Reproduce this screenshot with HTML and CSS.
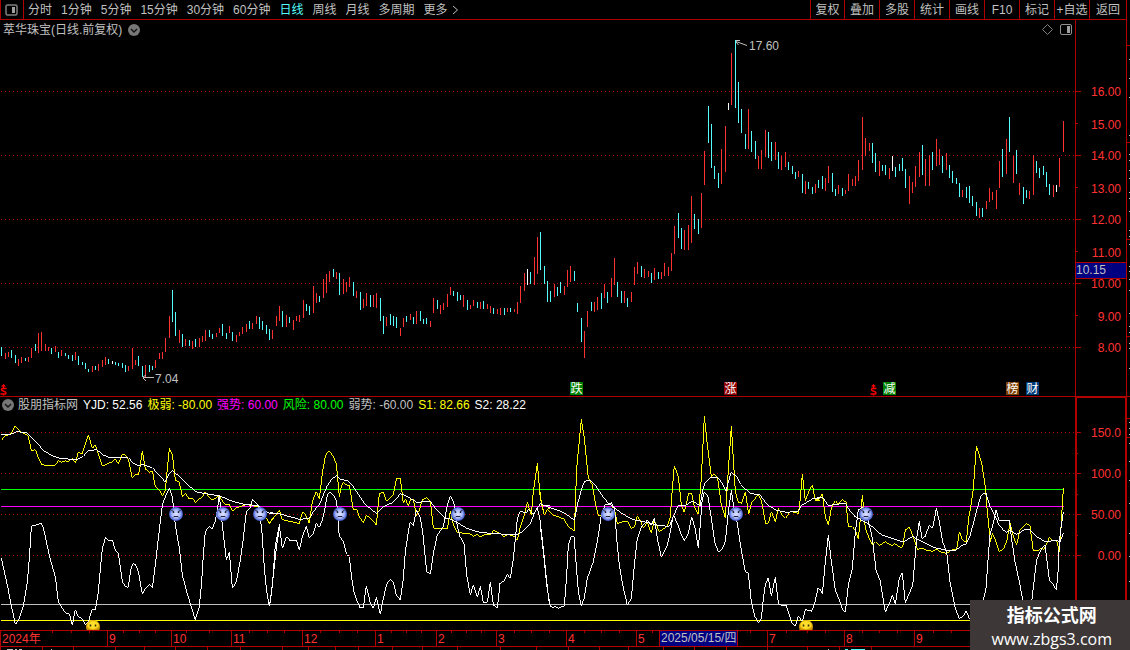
FILE: index.html
```html
<!DOCTYPE html>
<html lang="zh-CN">
<head>
<meta charset="utf-8">
<title>萃华珠宝 日线</title>
<link rel="stylesheet" href="styles.css">
</head>
<body>
<header class="toolbar">
  <button class="layout-btn" aria-label="布局"><svg width="13" height="12" viewBox="0 0 13 12"><rect x="1" y="1" width="11" height="10" rx="1.5" fill="none" stroke="#808080" stroke-width="1.5"/><rect x="7" y="3" width="3" height="6" fill="#a0a0a0"/></svg></button>
  <nav class="periods">
    <button>分时</button><button>1分钟</button><button>5分钟</button><button>15分钟</button><button>30分钟</button><button>60分钟</button><button class="active">日线</button><button>周线</button><button>月线</button><button>多周期</button><button class="more">更多<svg width="7" height="10" viewBox="0 0 7 10"><path d="M1 1L5.5 5L1 9" fill="none" stroke="#c0c0c0"/></svg></button>
  </nav>
  <div class="tools">
    <button>复权</button><button>叠加</button><button>多股</button><button>统计</button><button>画线</button><button>F10</button><button>标记</button><button>+自选</button><button>返回</button>
  </div>
</header>
<main>
<section class="panel">
  <div class="title-row">
    <h1>萃华珠宝(日线.前复权)</h1>
    <button class="round" aria-label="展开"><svg width="12" height="12" viewBox="0 0 12 12"><circle cx="6" cy="6" r="6" fill="#777"/><path d="M3 5L6 8L9 5" fill="none" stroke="#111" stroke-width="1.4"/></svg></button>
    <div class="corner">
      <svg width="11" height="11" viewBox="0 0 11 11"><path d="M5.500.5L10.500 5.500L5.500 10.500L.5 5.500Z" fill="none" stroke="#808080"/></svg>
      <svg width="12" height="11" viewBox="0 0 12 11"><rect x=".5" y=".5" width="11" height="10" rx="1.500" fill="none" stroke="#909090"/><rect x="7" y="2" width="3" height="7" fill="#a0a0a0"/></svg>
    </div>
    <div class="axis-gap"></div>
  </div>
  <svg class="chart" viewBox="0 39 1130 357" role="img" aria-label="日K线">
    <g class="grid">
      <path d="M1 91.500H1075M1 155.500H1075M1 219.500H1075M1 283.500H1075M1 347.500H1075"/>
    </g>
    <g class="bars" transform="translate(0 270) scale(.333333)">
      <path class="down" d="M4 231V258M34 240V264M46 255V279M76 264V273M106 222V243M154 234V252M175 246V264M196 249V258M205 255V267M217 255V273M235 258V285M247 276V285M256 279V297M265 297V306M286 288V300M325 267V282M346 276V285M355 279V288M367 279V294M376 285V306M415 258V288M427 288V321M448 285V306M457 288V300M517 60V156M526 126V198M547 192V231M568 210V228M586 207V231M628 180V201M637 192V207M667 162V198M679 189V207M697 186V213M748 153V177M778 141V177M787 153V180M799 165V192M808 177V210M847 123V171M868 141V159M919 102V123M928 108V135M958 78V96M1000 -3V21M1018 9V75M1060 36V78M1081 66V120M1111 75V111"/>
      <path class="up" d="M16 249V267M25 246V261M55 267V288M64 261V279M85 261V276M94 234V264M115 189V249M124 186V243M136 222V243M145 231V243M166 228V246M184 240V258M226 246V270M277 288V306M295 282V303M307 270V291M316 261V285M385 288V303M397 234V297M406 270V285M436 285V321M466 270V294M478 249V267M487 246V267M496 204V246M508 138V204M538 180V219M556 207V228M577 213V237M598 204V231M607 198V216M616 180V213M649 189V201M658 174V189M688 168V189M709 195V216M718 186V198M727 171V192M739 162V186M757 159V177M769 138V162M817 180V207M829 138V168M838 108V153M859 135V171M880 150V180M889 138V153M898 135V156M910 90V144M940 48V129M949 69V99M970 27V84M979 12V69M988 3V36M1009 6V27M1030 27V72M1039 36V66M1048 21V51M1069 63V84M1090 87V114M1099 69V108M1120 75V111M1129 69V114"/>
      <path class="flat" d="M337 273V282"/>
    </g>
    <g class="bars" transform="translate(370 220) scale(.333333)">
      <path class="down" d="M31 234V303M40 288V342M61 282V315M70 288V318M79 291V324M109 288V306M130 291V312M151 273V303M160 297V312M169 294V312M202 240V267M250 213V228M262 216V243M271 225V240M292 240V270M322 246V264M340 243V267M370 264V282M403 264V285M421 264V276M481 156V192M511 36V150M523 138V192M532 183V246M541 213V246M562 201V228M571 186V219M613 153V183M622 249V276M634 294V366M664 246V273M694 219V267M712 216V249M742 186V231M754 213V249M772 234V261M814 138V171M844 159V189M865 156V177"/>
      <path class="up" d="M49 291V318M91 324V348M100 294V321M121 282V300M139 273V312M181 303V321M190 234V279M211 255V282M220 249V270M232 222V261M241 201V225M280 225V261M301 255V267M310 240V258M331 246V267M352 252V267M361 258V279M382 267V282M391 264V285M412 264V276M433 267V276M442 246V282M451 198V249M463 159V213M493 111V195M502 51V162M553 192V231M583 198V225M592 150V201M601 138V186M643 333V414M652 273V321M673 246V276M682 231V270M703 192V234M724 174V231M733 114V195M763 213V249M784 216V246M793 141V195M802 126V162M823 147V174M835 153V171M853 144V180M874 156V177M883 129V168M895 141V168M904 99V153"/>
      <path class="flat" d="M472 147V195"/>
    </g>
    <g class="bars" transform="translate(660 30) scale(.333333)">
      <path class="up" d="M43 588V672M73 600V660M85 585V660M94 498V639M124 489V594M133 363V465M184 357V462M196 288V426M214 69V225M265 237V357M295 378V417M304 360V417M316 300V381M346 336V390M364 378V420M376 366V411M415 423V441M436 453V492M466 462V489M496 444V483M505 408V459M535 465V492M556 480V492M565 432V483M577 447V468M586 438V468M595 390V453M607 261V420"/>
      <path class="down" d="M55 549V624M64 594V657M103 552V597M115 567V612M145 228V339M154 282V414M163 408V447M175 429V474M226 30V234M235 156V279M244 237V309M256 312V357M274 303V366M286 333V387M325 306V384M334 336V393M355 366V417M385 396V420M397 408V432M406 426V447M427 432V489M445 456V477M457 471V492M475 450V474M487 438V477M517 429V486M526 477V498M547 474V498"/>
      <path class="flat" d="M205 219V240"/>
    </g>
    <g class="bars" transform="translate(850 90) scale(.333333)">
      <path class="up" d="M46 144V198M58 159V183M88 213V258M118 234V267M178 258V342M187 276V309M196 228V291M208 186V261M226 207V288M238 195V288M259 147V228M268 177V225M289 189V240M337 300V321M388 354V384M409 333V357M418 294V336M427 306V330M439 300V357M448 213V294M469 147V252M490 198V279M508 279V315M538 303V327M550 195V315M610 285V321M628 204V291M640 93V186"/>
      <path class="down" d="M67 159V219M76 189V246M97 225V243M106 225V255M136 231V261M148 222V243M157 204V243M166 237V294M217 165V255M247 186V240M277 198V249M298 225V264M307 243V279M319 264V282M328 279V321M349 291V324M358 288V339M367 318V348M379 336V378M397 354V381M457 177V261M478 81V186M499 180V252M520 291V342M529 300V324M559 213V249M568 234V264M580 228V255M589 246V291M598 282V315"/>
      <path class="flat" d="M127 198V243M619 285V306"/>
    </g>
    <g class="note">
      <path d="M736 40.500H740M736 41.500L747 45.500M736 42L738.500 45"/><text x="749" y="50">17.60</text>
      <path d="M143 377.500H154M143 377L146 375M143 378L146 381"/><text x="155" y="383">7.04</text>
    </g>
    <g class="tags">
      <rect x="570" y="382" width="13" height="13" fill="#008000"/><text x="570.500" y="393">跌</text>
      <rect x="724" y="382" width="13" height="13" fill="#900000"/><text x="724.500" y="393">涨</text>
      <rect x="883" y="382" width="13" height="13" fill="#008000"/><text x="883.500" y="393">减</text>
      <rect x="1006" y="382" width="13" height="13" fill="#804000"/><text x="1006.500" y="393">榜</text>
      <rect x="1026" y="382" width="13" height="13" fill="#003c78"/><text x="1026.500" y="393">财</text>
    </g>
    <defs><g id="bonus"><path d="M1 2.500L3.500 0L6 2.500Z" fill="#f00"/><path d="M6.500 4.500H2L1.500 5.500L2 6.500L5.500 8L6 9L5.500 10H.5M3.500 2V4M3.500 10V11.500" fill="none" stroke="#f00" stroke-width="1.400"/></g></defs>
    <use href="#bonus" x="0" y="384"/><use href="#bonus" x="870" y="384"/>
    <path class="frame" d="M1075.500 39V396M1126.500 39V396M1076 91.500H1081M1076 123.500H1078M1076 155.500H1081M1076 187.500H1078M1076 219.500H1081M1076 251.500H1078M1076 283.500H1081M1076 315.500H1078M1076 347.500H1081M1127 45.500H1130M1127 142.500H1130M1127 239.500H1130M1127 336.500H1130"/>
    <path class="edge" d="M1129.500 59v1m0 18v1m0 18v1m0 37v1m0 18v1m0 5v1m0 9v1m0 7v1m0 13v1m0 5v1m0 12v1m0 18v1m0 5v1m0 7v1m0 21v1m0 4v1m0 7v1m0 10v1m0 22v1m0 12v1m0 5v1m0 10v1m0 4v1m0 19v1"/>
    <g class="scale">
      <text x="1121" y="96">16.00</text><text x="1121" y="129">15.00</text><text x="1121" y="160">14.00</text><text x="1121" y="193">13.00</text><text x="1121" y="224">12.00</text><text x="1121" y="257">11.00</text><text x="1121" y="288">10.00</text><text x="1121" y="321">9.00</text><text x="1121" y="352">8.00</text>
    </g>
    <rect x="1076" y="262" width="50" height="16" fill="#000080"/>
    <path class="frame" d="M1075 262.500H1127M1075 278.500H1127"/>
    <text class="cursor" x="1076" y="274">10.15</text>
  </svg>
</section>
<section class="panel indicator">
  <div class="legend">
    <button class="round" aria-label="展开"><svg width="12" height="12" viewBox="0 0 12 12"><circle cx="6" cy="6" r="6" fill="#777"/><path d="M3 5L6 8L9 5" fill="none" stroke="#111" stroke-width="1.4"/></svg></button>
    <span>股朋指标网</span><span class="white">YJD: 52.56</span><span class="yellow">极弱: -80.00</span><span class="magenta">强势: 60.00</span><span class="green">风险: 80.00</span><span>弱势: -60.00</span><span class="yellow">S1: 82.66</span><span class="white">S2: 28.22</span>
    <i class="axis-top"></i>
  </div>
  <svg class="chart" viewBox="0 413 1130 237" role="img" aria-label="YJD指标">
    <defs>
      <radialGradient id="ballBlue"><stop offset="0" stop-color="#e0e4ff"/><stop offset=".6" stop-color="#a8b8ff"/><stop offset="1" stop-color="#3850c0"/></radialGradient>
      <g id="sad"><circle r="7" fill="url(#ballBlue)"/><path d="M-4.500 -3.500L-2 -2.500M4.500 -3.500L2 -2.500M-3 3.500L-2 2.500H2L3 3.500" fill="none" stroke="#202030"/><path d="M-2.500 -2.500V-1M2.500 -2.500V-1" stroke="#202030" stroke-width="1.500"/></g>
      <radialGradient id="ballGold"><stop offset="0" stop-color="#ffe838"/><stop offset=".7" stop-color="#ffd820"/><stop offset="1" stop-color="#c89000"/></radialGradient>
      <g id="calm"><path d="M-6.300 3A7 7 0 1 1 6.300 3Z" fill="url(#ballGold)"/><path d="M-2.500 -2.500V-.5M2.500 -2.500V-.5" stroke="#403000" stroke-width="1.600"/></g>
    </defs>
    <g class="grid"><path d="M1 432.500H1075M1 473.500H1075M1 514.500H1075M1 555.500H1075"/></g>
    <g class="levels"><path stroke="#00ff00" d="M1 489.500H1064"/><path stroke="#ff00ff" d="M1 506.500H1064"/><path stroke="#c0c0c0" d="M1 604.500H1064"/><path stroke="#ffff00" d="M1 620.500H1064"/></g>
    <g class="lines" transform="translate(0 395) scale(.333333)">
      <polyline class="s1" points="4,136 16,122 25,120 34,114 46,92 55,104 64,112 76,117 85,124 94,168 106,164 115,188 124,207 136,211 166,210 175,197 184,202 196,197 205,200 217,190 226,204 235,172 247,176 256,146 265,119 277,160 286,150 295,178 307,213 325,205 337,200 346,193 355,207 367,178 376,180 385,192 397,250 406,238 415,240 421,210 427,168 436,222 448,232 457,228 466,275 478,285 487,302 496,288 502,220 508,160 517,178 526,256 538,262 547,305 556,295 568,312 577,308 586,322 598,312 607,306 616,290 625,303 637,315 646,310 658,302 667,318 679,330 688,328 697,348 709,338 727,333 739,328 757,332 778,337 790,360 799,368 808,386 817,370 829,358 840,346"/>
      <polyline class="s2" points="4,118 25,120 52,110 82,114 106,138 130,166 160,184 180,190 230,194 250,184 265,167 290,164 310,180 330,189 385,188 400,204 415,213 427,208 457,218 470,232 495,260 505,240 517,227 535,242 560,265 586,290 610,295 660,303 700,320 730,327 775,332 790,345 810,356 840,355"/>
      <polyline class="yjd" points="4,489 22,570 34,632 46,688 55,678 70,632 82,560 88,490 94,394 124,385 130,398 150,490 166,545 175,620 190,645 200,657 208,657 217,690 226,644 235,665 247,672 256,690 265,680 277,642 286,645 295,590 302,510 307,462 316,428 325,436 337,436 346,465 355,475 367,560 376,575 385,577 392,525 398,506 406,508 415,530 427,597 436,580 448,568 457,578 466,510 475,430 487,330 496,305 508,280 517,305 526,390 538,460 547,540 560,590 575,640 586,674 598,635 605,560 610,480 616,410 628,394 637,402 645,380 652,345 658,300 667,390 679,495 688,472 697,580 709,560 720,500 730,430 739,350 750,340 757,313 775,330 785,400 793,520 800,590 808,632 815,590 820,540 830,450 840,388"/>
    </g>
    <g class="lines" transform="translate(270 395) scale(.333333)">
      <polyline class="s1" points="0,383 10,370 28,346 37,374 55,378 88,386 97,352 103,353 118,385 127,320 139,290 148,312 157,235 166,183 172,172 178,168 187,180 199,205 208,305 214,275 220,262 232,272 238,270 250,345 260,343 268,365 280,383 289,361 301,370 310,378 319,390 328,295 340,292 349,318 358,313 370,298 379,252 391,250 400,325 406,312 415,332 421,315 430,312 439,362 448,345 457,315 469,308 481,317 490,398 500,402 532,402 541,348 550,390 562,413 600,416 610,424 622,418 631,425 645,418 660,420 672,406 690,415 702,425 715,418 732,424 742,435 750,400 760,370 772,322 784,360 790,290 802,205 811,310 823,360 832,343 840,340"/>
      <polyline class="s2" points="0,353 30,357 88,373 118,370 130,350 150,325 160,300 172,272 184,255 199,241 210,252 235,258 250,275 268,302 285,328 319,355 340,335 370,322 391,296 415,306 440,322 481,319 500,345 525,370 541,372 565,384 590,400 620,410 660,415 740,420 760,408 780,388 795,350 811,326 825,333 840,333"/>
      <polyline class="yjd" points="0,624 8,560 16,450 28,392 37,460 50,425 60,437 79,436 88,465 97,425 109,394 118,430 130,415 139,385 148,397 157,375 163,350 172,300 180,290 193,305 200,320 205,390 208,425 220,438 230,478 238,485 245,550 252,590 262,620 270,638 280,638 289,572 300,620 310,640 319,607 331,658 340,610 350,568 361,553 370,560 379,600 391,615 400,550 406,470 415,410 421,380 430,392 439,345 450,365 458,410 465,480 470,530 481,538 490,475 502,420 520,395 532,330 541,302 550,320 556,345 562,395 570,425 582,445 590,540 601,600 610,570 622,607 631,574 640,622 652,622 661,560 670,630 682,640 690,565 702,558 712,538 721,550 730,490 736,430 742,370 750,350 770,352 775,342 784,350 790,358 802,338 810,375 820,460 830,560 838,625"/>
    </g>
    <g class="lines" transform="translate(540 395) scale(.333333)">
      <polyline class="s1" points="0,290 5,330 13,360 22,342 40,360 72,372 85,395 103,408 110,220 124,73 133,130 145,250 157,270 166,325 175,360 186,363 222,335 232,385 250,380 262,378 274,400 284,395 292,362 301,378 310,398 322,383 334,415 343,375 358,410 370,402 382,393 391,365 397,280 403,212 415,245 424,330 433,352 446,295 455,296 463,335 475,358 484,250 493,64 502,150 514,245 522,236 533,250 544,330 556,368 564,240 574,94 586,290 595,322 605,325 616,290 626,358 634,325 655,298 665,320 677,387 685,385 694,350 706,380 715,340 725,358 737,370 750,350 765,352 775,356 780,320 787,237 796,318 808,285 817,270 826,316 840,316"/>
      <polyline class="s2" points="0,326 30,338 70,352 103,375 112,330 124,285 133,260 148,255 163,266 185,300 205,325 225,340 250,358 280,374 320,382 360,392 388,394 400,365 415,330 435,332 457,318 480,332 488,285 496,262 510,248 535,248 548,268 558,288 568,250 574,232 590,245 602,268 630,295 660,300 683,330 710,346 740,352 775,349 783,332 800,322 817,312 840,312"/>
      <polyline class="yjd" points="0,385 10,470 20,570 31,635 40,637 45,635 55,640 73,632 80,540 85,450 94,424 102,424 108,500 115,590 124,634 133,608 142,550 160,500 172,440 184,360 195,330 205,330 214,322 224,345 230,430 238,510 250,580 262,630 274,610 283,510 292,430 305,395 322,375 334,390 343,370 352,430 364,487 382,450 390,415 400,360 412,385 422,415 433,437 445,415 455,365 465,400 475,460 480,400 486,320 493,290 504,305 514,370 525,445 536,472 547,462 556,440 565,350 574,286 582,340 592,385 603,460 616,530 625,535 634,620 645,665 656,684 664,670 670,610 676,570 685,548 694,602 706,546 715,625 725,632 738,631 748,660 757,686 766,694 775,663 787,680 796,643 815,649 824,625 834,580 840,583"/>
    </g>
    <g class="lines" transform="translate(800 395) scale(.333333)">
      <polyline class="s1" points="46,316 58,312 67,296 76,365 85,390 94,340 106,317 115,328 127,313 138,322 145,394 157,395 166,405 175,432 182,360 187,300 196,400 208,430 217,450 226,440 238,452 256,440 275,452 285,446 302,458 308,455 316,405 328,397 340,425 352,463 366,460 380,466 398,469 410,463 420,470 440,475 455,465 470,464 478,410 487,434 499,442 506,370 514,325 520,280 529,153 538,180 546,210 556,275 562,350 571,440 577,415 588,440 598,470 610,462 620,440 630,385 640,425 650,450 660,405 679,385 690,393 700,468 712,468 722,460 732,463 748,428 760,437 770,437 778,470 784,380 790,280"/>
      <polyline class="s2" points="37,312 67,306 85,333 106,328 136,325 148,345 165,365 190,378 217,395 245,420 310,441 338,424 360,437 400,457 440,466 468,466 480,455 499,446 510,422 520,385 530,345 542,305 550,296 558,295 570,335 583,358 597,390 610,405 620,412 630,406 650,418 672,405 688,402 710,425 735,440 770,436 780,440 790,415"/>
      <polyline class="yjd" points="60,583 67,597 76,500 85,421 94,500 106,585 116,610 126,640 136,652 145,570 157,520 166,410 175,345 187,335 200,360 208,390 217,430 228,525 240,555 256,652 270,620 277,600 286,627 298,550 307,533 316,625 325,600 338,573 345,490 350,430 358,379 366,430 375,425 388,390 398,400 409,340 418,380 428,440 440,470 450,560 466,640 478,670 488,665 499,648 508,670 514,676 530,660 545,640 558,580 565,480 570,420 580,385 588,345 597,376 628,375 636,440 645,500 658,560 670,625 685,640 695,620 702,560 710,495 722,465 735,450 748,555 757,565 769,585 775,520 778,440 784,390 790,350"/>
    </g>
    <use href="#sad" x="176" y="514"/><use href="#sad" x="223" y="514"/><use href="#sad" x="260" y="514"/><use href="#sad" x="340" y="514"/><use href="#sad" x="458" y="514"/><use href="#sad" x="608" y="514"/><use href="#sad" x="736" y="514"/><use href="#sad" x="866" y="514"/>
    <use href="#calm" x="93" y="627"/><use href="#calm" x="806" y="627"/>
    <path class="frame thick" d="M1076 413V630M1126 413V630"/>
    <path class="frame" d="M1077 432.500H1081M1077 453.500H1078M1077 473.500H1081M1077 494.500H1078M1077 514.500H1081M1077 535.500H1078M1077 555.500H1081M1127 418.500H1130M1127 437.500H1130"/>
    <path class="edge" d="M1129.500 422v1m0 5v1m0 5v1m0 8v1m0 17v1m0 18v1m0 22v1m0 29v1m0 22v1m0 24v1"/>
    <g class="scale"><text x="1121" y="437">150.0</text><text x="1121" y="478">100.0</text><text x="1121" y="519">50.00</text><text x="1121" y="560">0.00</text></g>
    <path class="frame" d="M0 630.500H1130M0 646.500H1130M.5 630V646M107.500 631V646M171.500 631V646M231.500 631V646M302.500 631V646M375.500 631V646M436.500 631V646M496.500 631V646M566.500 631V646M636.500 631V646M767.500 631V646M844.500 631V646M914.500 631V646"/>
    <path class="frame" d="M52.500 631v2M71.500 631v2M89.500 631v2M123.500 631v2M139.500 631v2M155.500 631v2M186.500 631v2M209.500 631v2M249.500 631v2M267.500 631v2M284.500 631v2M320.500 631v2M339.500 631v2M357.500 631v2M391.500 631v2M406.500 631v2M421.500 631v2M451.500 631v2M466.500 631v2M481.500 631v2M514.500 631v2M531.500 631v2M549.500 631v2M584.500 631v2M601.500 631v2M619.500 631v2M652.500 631v2M750.500 631v2M786.500 631v2M807.500 631v2M825.500 631v2M862.500 631v2M879.500 631v2M897.500 631v2M933.500 631v2M951.500 631v2"/>
    <path class="frame" d="M.5 647v3M42.500 647v3M73.500 647v3M115.500 647v3M144.500 647v3M175.500 647v3M207.500 647v3M240.500 647v3M282.500 647v3M308.500 647v3M335.500 647v3M358.500 647v3M392.500 647v3M422.500 647v3M457.500 647v3M500.500 647v3M536.500 647v3M568.500 647v3M599.500 647v3M628.500 647v3M663.500 647v3M694.500 647v3M726.500 647v3M767.500 647v3M807.500 647v3M839.500 647v3M871.500 647v3"/>
    <path class="edge" d="M7 649.500h6m2 0h2m2 0h3m29 0h1M828 649.500h1"/><path d="M845 649.500h3m3 0h14" stroke="#54fcfc"/>
    <g class="months"><text x="2" y="643">2024年</text><text x="109" y="643">9</text><text x="173" y="643">10</text><text x="233" y="643">11</text><text x="304" y="643">12</text><text x="377" y="643">1</text><text x="438" y="643">2</text><text x="498" y="643">3</text><text x="568" y="643">4</text><text x="638" y="643">5</text><text x="769" y="643">7</text><text x="846" y="643">8</text><text x="916" y="643">9</text></g>
    <rect x="660" y="631" width="77" height="15" fill="#000080"/><path class="frame" d="M659.500 631V646M737.500 631V646"/><text class="cursor" x="661" y="642">2025/05/15/四</text>
  </svg>
</section>
</main>
<aside class="watermark"><strong>指标公式网</strong><span>www.zbgs3.com</span></aside>
</body>
</html>
```
FILE: styles.css
```css
* { box-sizing: border-box; }
body { margin: 0; background: #000; color: #c0c0c0; font: 12px/16px "Liberation Sans", "Noto Sans CJK SC", sans-serif; overflow: hidden; position: relative; }
button { margin: 0; padding: 0; border: 0; background: none; color: inherit; font: inherit; white-space: nowrap; }
.toolbar { display: flex; height: 20px; margin-right: 3px; border-bottom: 1px solid #b00000; border-right: 1px solid #b00000; }
.layout-btn { display: flex; align-items: center; padding-left: 4px; width: 24px; border-left: 1px solid #b00000; border-right: 1px solid #b00000; }
.periods { display: flex; gap: 9px; padding-left: 4px; align-items: center; }
.periods .active { color: #54fcfc; }
.more { display: flex; align-items: center; gap: 4px; }
.tools { display: flex; margin-left: auto; }
.tools button { width: 35px; border-left: 1px solid #b00000; }
.tools button:first-child { width: 34px; }
.tools button:last-child { width: 37px; }
.panel { display: flex; flex-direction: column; }
.title-row { display: flex; align-items: center; height: 19px; padding-left: 3px; gap: 6px; }
.title-row h1 { margin: 0; font: inherit; }
.round { display: flex; }
.corner { display: flex; align-items: center; gap: 7px; margin-left: auto; margin-right: -3px; }
.axis-gap { align-self: stretch; width: 52px; margin-right: 3px; border: solid #b00000; border-width: 0 1px; }
.chart { display: block; width: 100%; height: auto; }
.legend { display: flex; align-items: center; gap: 5px; height: 17px; padding-left: 2px; border-top: 1px solid #b00000; }
.legend .round { margin-right: -1px; }
.legend span { white-space: nowrap; }
.axis-top { align-self: stretch; width: 52px; margin-left: auto; margin-right: 3px; border: 2px solid #b00000; border-top-width: 1px; border-bottom: 0; }
.white { color: #fff; }
.yellow { color: #ff0; }
.magenta { color: #f0f; }
.green { color: #0f0; }
.grid path { stroke: #b00000; stroke-dasharray: 1 3; shape-rendering: crispEdges; }
.bars path { fill: none; stroke-width: 3; shape-rendering: crispEdges; }
.bars .up { stroke: #ff3232; }
.bars .down { stroke: #54fcfc; }
.bars .flat { stroke: #fff; }
.levels path, .frame, .edge { shape-rendering: crispEdges; }
.frame { fill: none; stroke: #b00000; }
.thick { stroke-width: 2; }
.edge { stroke: #c0c0c0; }
.lines polyline { fill: none; stroke-width: 3; shape-rendering: crispEdges; }
.s1 { stroke: #ff0; }
.s2, .yjd { stroke: #fff; }
.note path { fill: none; stroke: #c0c0c0; }
.note text, .cursor { fill: #c0c0c0; }
.tags text { fill: #fff; }
.scale text { fill: #ff3232; text-anchor: end; }
.months text { fill: #ff3232; }
.watermark { position: absolute; right: 0; bottom: 0; display: flex; flex-direction: column; align-items: center; padding: 1px 18px 0 22px; background: #3d3737; color: #fff; height: 50px; }
.watermark strong { font: bold 18px/27px "Noto Sans CJK SC", sans-serif; }
.watermark span { font: 16px/22px "Open Sans", sans-serif; }
```
